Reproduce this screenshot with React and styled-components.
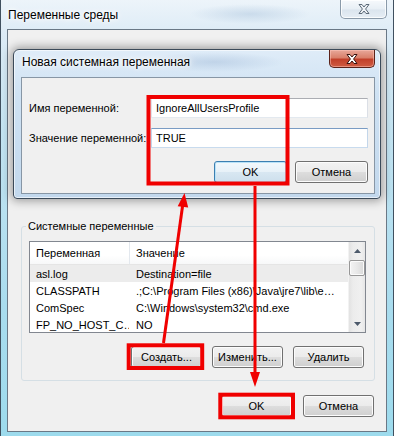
import React from 'react';
import styled, { createGlobalStyle } from 'styled-components';

const FONT = '"Liberation Sans", Arial, sans-serif';
const RED = '#f00000';

const GlobalStyle = createGlobalStyle`
  html, body {
    margin: 0;
    padding: 0;
  }
  body {
    width: 394px;
    height: 436px;
    overflow: hidden;
    background: #a6dcee;
    font-family: ${FONT};
    font-size: 11px;
    color: #000;
  }
  * {
    box-sizing: border-box;
  }
`;

const Window = styled.div`
  position: relative;
  width: 394px;
  height: 436px;
  padding: 0 7px 4px 7px;
  display: flex;
  flex-direction: column;
  overflow: hidden;
  background:
    radial-gradient(ellipse 60px 10px at 250px 14px, rgba(150, 180, 210, 0.35), transparent),
    radial-gradient(ellipse 50px 8px at 330px 40px, rgba(150, 180, 210, 0.3), transparent),
    linear-gradient(180deg, #edf4fa 0%, #dcebf6 8%, #c4e4f2 30%, #a9dcee 70%, #9ddbed 100%);
  box-shadow: inset 1px 0 #40505f, inset -1px 0 #40505f;
`;

const TitleBar = styled.div`
  height: ${p => p.$height}px;
  flex: none;
  display: flex;
  justify-content: space-between;
  align-items: flex-start;
`;

const Title = styled.div`
  padding: ${p => p.$top}px 0 0 1px;
  font-size: 12px;
  line-height: 15px;
  color: #000;
  text-shadow: 0 0 6px #fff, 0 0 3px #fff, 0 0 10px #fff;
`;

const CloseButton = styled.div`
  width: ${p => p.$width}px;
  height: ${p => p.$height}px;
  display: flex;
  align-items: center;
  justify-content: center;
  border: 1px solid ${p => (p.$active ? '#5b2219' : '#8a9aa9')};
  border-top: none;
  border-radius: 0 0 5px 5px;
  background: ${p =>
    p.$active
      ? 'linear-gradient(180deg, #e8a89a 0%, #d9806b 45%, #c2402a 55%, #cf5c42 100%)'
      : 'linear-gradient(180deg, #f6f9fc 0%, #e8eff5 50%, #dbe5ee 55%, #e6eef5 100%)'};
  box-shadow: inset 0 0 0 1px ${p => (p.$active ? 'rgba(255,200,190,0.5)' : 'rgba(255,255,255,0.8)')};
`;

const Client = styled.div`
  flex: 1;
  display: flex;
  flex-direction: column;
  border: 1px solid #6a7886;
  background: #f0f0f0;
`;

const Group = styled.fieldset`
  margin: 189px 11px 0 13px;
  padding: 8px 8px 12px 7px;
  border: 1px solid #d5dfe5;
  border-radius: 3px;
  min-width: 0;
`;

const Legend = styled.legend`
  margin-left: -3px;
  padding: 0 2px;
  font-size: 11px;
  line-height: 14px;
`;

const ListBox = styled.div`
  height: 92px;
  display: flex;
  border: 1px solid #828790;
  background: #fff;
`;

const ListMain = styled.div`
  flex: 1;
  min-width: 0;
  overflow: hidden;
`;

const HeaderRow = styled.div`
  height: 23px;
  display: flex;
  border-bottom: 1px solid #e5e5e5;
  background: linear-gradient(180deg, #ffffff 0%, #ffffff 60%, #f7f8f9 100%);
`;

const Row = styled.div`
  height: 17px;
  display: flex;
  background: ${p => (p.$selected ? '#ececec' : 'transparent')};
`;

const Cell = styled.div`
  width: ${p => (p.$first ? '99px' : 'auto')};
  flex: ${p => (p.$first ? 'none' : '1')};
  min-width: 0;
  display: flex;
  align-items: center;
  padding-left: 6px;
  white-space: nowrap;
  overflow: hidden;
  font-size: 11px;
  border-left: ${p => (p.$header && !p.$first ? '1px solid #e3e8ee' : 'none')};
  margin-left: ${p => (p.$header || p.$first ? '0' : '1px')};
`;

const ScrollBar = styled.div`
  width: 17px;
  flex: none;
  display: flex;
  flex-direction: column;
  background: linear-gradient(90deg, #e2e2e2 0%, #ececec 25%, #f0f0f0 75%, #e6e6e6 100%);
  border-left: 1px solid #f2f2f2;
`;

const ScrollArrow = styled.div`
  height: 17px;
  display: flex;
  align-items: center;
  justify-content: center;
`;

const Thumb = styled.div`
  height: 16px;
  margin: 1px 0 0 0;
  border: 1px solid #979797;
  border-radius: 2px;
  background: linear-gradient(90deg, #f3f3f3 0%, #e8e8e8 50%, #d9d9d9 100%);
  box-shadow: inset 0 0 0 1px #fbfbfb;
`;

const Spacer = styled.div`
  flex: 1;
`;

const ButtonRow = styled.div`
  display: flex;
  justify-content: flex-end;
  gap: ${p => p.$gap}px;
  margin: ${p => p.$margin};
`;

const Button = styled.div`
  width: ${p => p.$width || 73}px;
  height: 22px;
  display: flex;
  align-items: center;
  justify-content: center;
  font-size: 11px;
  border: 1px solid ${p => (p.$default ? '#3c7fb1' : '#707070')};
  border-radius: 3px;
  background: ${p =>
    p.$default
      ? 'linear-gradient(180deg, #f2f8fc 0%, #e7f1f8 50%, #d8e7f2 52%, #cddfec 100%)'
      : 'linear-gradient(180deg, #f2f2f2 0%, #ebebeb 50%, #dddddd 52%, #cfcfcf 100%)'};
  box-shadow: inset 0 0 0 1px ${p => (p.$default ? '#b9e2f8' : '#fcfcfc')};
`;

const Dialog = styled.div`
  position: absolute;
  left: 13px;
  top: 49px;
  width: 368px;
  height: 150px;
  display: flex;
  flex-direction: column;
  padding: 0 5px 4px 7px;
  border: 1px solid #3b4a59;
  border-radius: 6px 6px 4px 4px;
  background:
    radial-gradient(ellipse 70px 10px at 200px 12px, rgba(160, 185, 215, 0.45), transparent),
    linear-gradient(180deg, #dfecf8 0%, #cfe2f3 30%, #c2d8ed 100%);
  box-shadow: 0 0 10px 2px rgba(0, 0, 0, 0.35), inset 0 0 0 1px rgba(255, 255, 255, 0.6);
`;

const DialogClient = styled.div`
  flex: 1;
  padding: 20px 6px 0 7px;
  border: 1px solid #8796a5;
  background: #f0f0f0;
`;

const Form = styled.div`
  display: grid;
  grid-template-columns: 122px 1fr;
  row-gap: 10px;
  align-items: center;
`;

const Label = styled.div`
  font-size: 11px;
  white-space: nowrap;
`;

const Field = styled.div`
  height: 20px;
  display: flex;
  align-items: center;
  padding: 0 4px;
  font-size: 11px;
  background: #fff;
  border: 1px solid;
  border-color: ${p =>
    p.$focus ? '#7a9cc4 #c3d6ea #c8dbee #c3d6ea' : '#abadb3 #dbdfe6 #e3e9ef #e2e3ea'};
`;

const Overlay = styled.svg`
  position: absolute;
  left: 0;
  top: 0;
  pointer-events: none;
`;

const rows = [
  { name: 'asl.log', value: 'Destination=file', selected: true },
  { name: 'CLASSPATH', value: '.;C:\\Program Files (x86)\\Java\\jre7\\lib\\e…' },
  { name: 'ComSpec', value: 'C:\\Windows\\system32\\cmd.exe' },
  { name: 'FP_NO_HOST_C…', value: 'NO' },
];

const CloseGlyph = ({ active }) => (
  <svg width="14" height="12" viewBox="0 0 14 12">
    <path
      d="M2 1.5 L5 1.5 L7 4 L9 1.5 L12 1.5 L8.6 6 L12 10.5 L9 10.5 L7 8 L5 10.5 L2 10.5 L5.4 6 Z"
      fill={active ? '#ffffff' : '#eef2f6'}
      stroke={active ? '#3a1410' : '#5c6a78'}
      strokeWidth="1"
      strokeLinejoin="round"
    />
  </svg>
);

const ArrowGlyph = ({ down }) => (
  <svg width="7" height="4" viewBox="0 0 7 4">
    <path d={down ? 'M0 0 L7 0 L3.5 4 Z' : 'M0 4 L7 4 L3.5 0 Z'} fill="#4d5a6b" />
  </svg>
);

const App = () => (
  <>
    <GlobalStyle />
    <Window>
      <TitleBar $height={29}>
        <Title $top={8}>Переменные среды</Title>
        <CloseButton $width={47} $height={19}>
          <CloseGlyph />
        </CloseButton>
      </TitleBar>

      <Client>
        <Group>
          <Legend>Системные переменные</Legend>
          <ListBox>
            <ListMain>
              <HeaderRow>
                <Cell $first $header>Переменная</Cell>
                <Cell $header>Значение</Cell>
              </HeaderRow>
              {rows.map(r => (
                <Row key={r.name} $selected={r.selected}>
                  <Cell $first>{r.name}</Cell>
                  <Cell>{r.value}</Cell>
                </Row>
              ))}
            </ListMain>
            <ScrollBar>
              <ScrollArrow>
                <ArrowGlyph />
              </ScrollArrow>
              <Thumb />
              <Spacer />
              <ScrollArrow>
                <ArrowGlyph down />
              </ScrollArrow>
            </ScrollBar>
          </ListBox>
          <ButtonRow $gap={10} $margin="13px 2px 0 0">
            <Button $width={71}>Создать...</Button>
            <Button $width={71}>Изменить...</Button>
            <Button $width={71}>Удалить</Button>
          </ButtonRow>
        </Group>
        <ButtonRow $gap={11} $margin="14px 12px 0 0">
          <Button $width={71}>OK</Button>
          <Button $width={71}>Отмена</Button>
        </ButtonRow>
      </Client>

      <Dialog>
        <TitleBar $height={27}>
          <Title $top={5}>Новая системная переменная</Title>
          <CloseButton $active $width={46} $height={18}>
            <CloseGlyph active />
          </CloseButton>
        </TitleBar>
        <DialogClient>
          <Form>
            <Label>Имя переменной:</Label>
            <Field>IgnoreAllUsersProfile</Field>
            <Label>Значение переменной:</Label>
            <Field $focus>TRUE</Field>
          </Form>
          <ButtonRow $gap={8} $margin="13px 0 0 0">
            <Button $default>OK</Button>
            <Button>Отмена</Button>
          </ButtonRow>
        </DialogClient>
      </Dialog>

      <Overlay width="394" height="436" viewBox="0 0 394 436">
        <g fill="none" stroke={RED} strokeWidth="4">
          <rect x="148.5" y="97" width="139" height="86.5" />
          <rect x="128.7" y="345.3" width="73.5" height="22.7" />
          <rect x="220.3" y="394.7" width="72.7" height="22.6" />
        </g>
        <g stroke={RED} strokeWidth="3" fill={RED}>
          <line x1="163.5" y1="343" x2="182.7" y2="205" />
          <polygon points="184.5,193 188.2,207.6 177.7,206.2" stroke="none" />
          <line x1="255" y1="186" x2="255" y2="374" />
          <polygon points="250,372 260,372 255,387" stroke="none" />
        </g>
      </Overlay>
    </Window>
  </>
);

export default App;
